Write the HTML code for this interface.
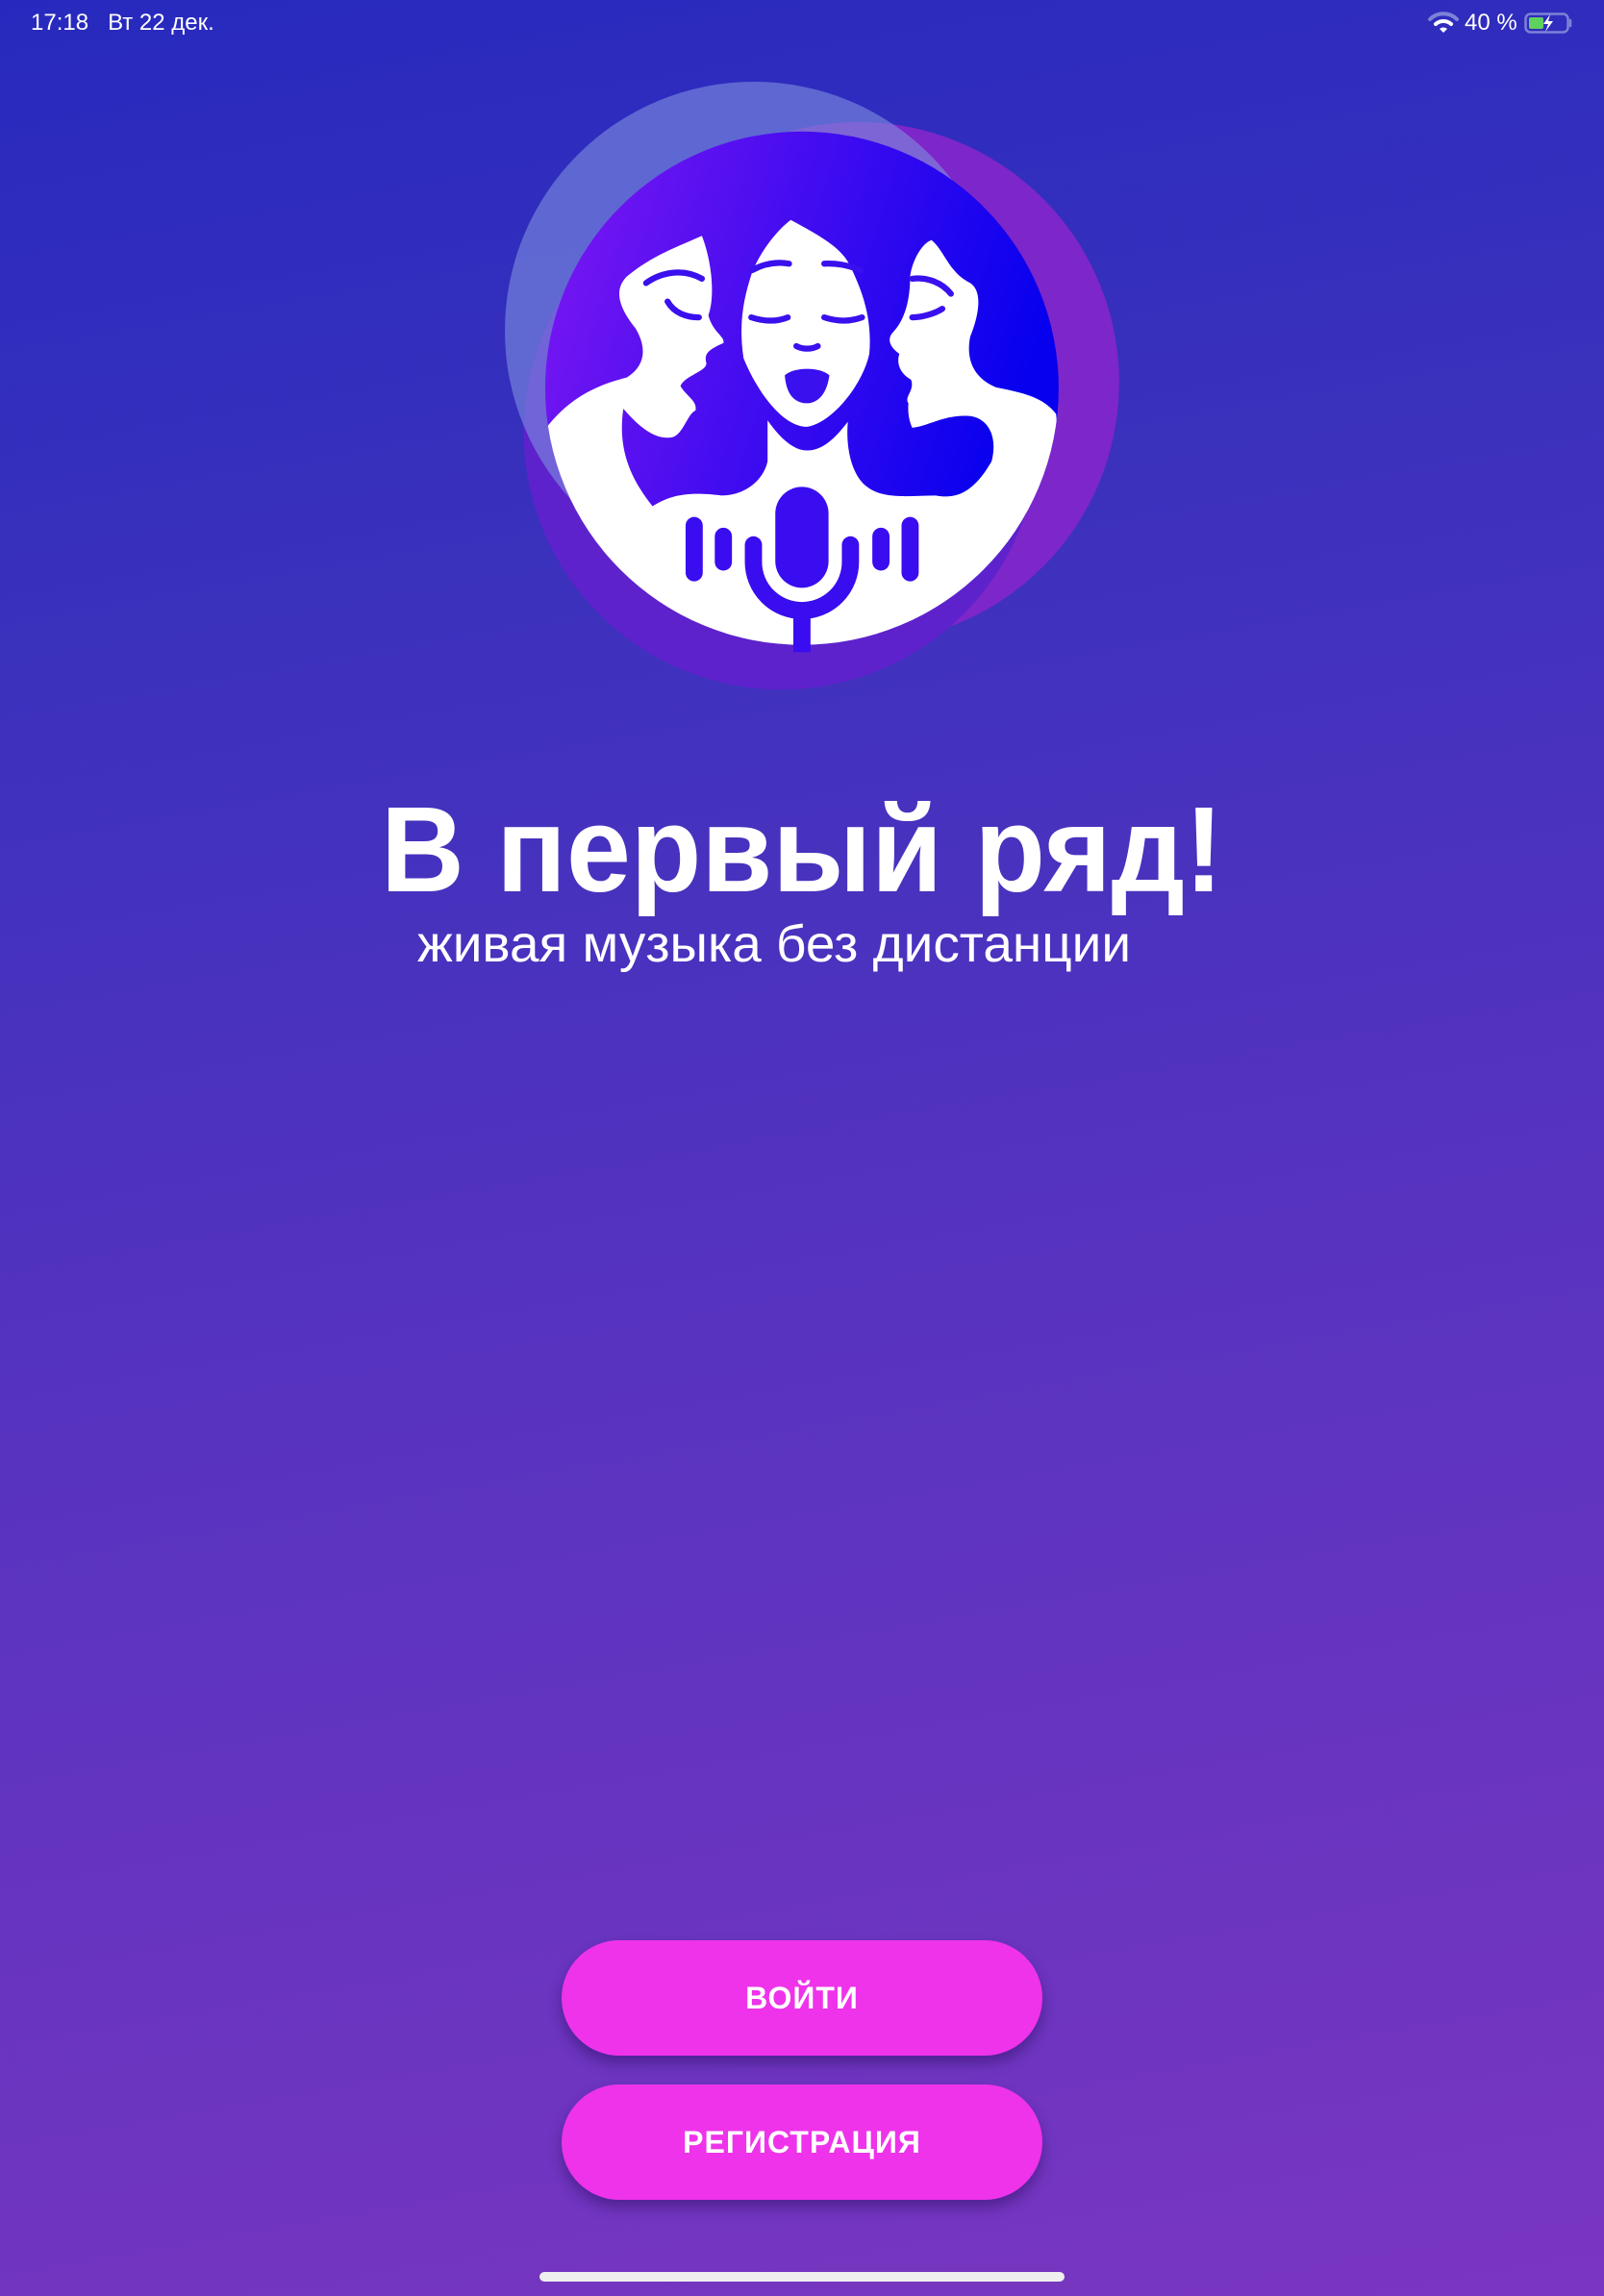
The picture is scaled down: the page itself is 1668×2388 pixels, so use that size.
<!DOCTYPE html>
<html><head><meta charset="utf-8"><style>
html,body{margin:0;padding:0}
body{width:1668px;height:2388px;overflow:hidden;position:relative;background:linear-gradient(170deg,#2729be 0%,#3a31bd 25%,#5633c0 55%,#7a36c0 100%);font-family:"Liberation Sans",sans-serif;color:#fff}
.st{position:absolute;top:8px;font-size:24px;line-height:32px}
.btn{position:absolute;left:584px;width:500px;height:120px;border-radius:60px;background:#ee33ea;box-shadow:0 8px 14px rgba(40,10,90,.45);text-align:center;line-height:120px;font-weight:bold;font-size:32px;letter-spacing:1px}
</style></head><body>
<div class="st" style="left:32px">17:18&nbsp;&nbsp;&nbsp;Вт 22 дек.</div>
<svg style="position:absolute;left:1484px;top:12px" width="34" height="24" viewBox="0 0 34 24">
<path d="M3 8 A20 20 0 0 1 31 8" stroke="#7d82d8" stroke-width="4" fill="none" stroke-linecap="round"/>
<path d="M9 13 A12 12 0 0 1 25 13" stroke="#fff" stroke-width="4" fill="none" stroke-linecap="round"/>
<path d="M13 18 L17 22 L21 18 A6 6 0 0 0 13 18Z" fill="#fff"/>
</svg>
<div class="st" style="left:1523px">40 %</div>
<svg style="position:absolute;left:1585px;top:13px" width="52" height="22" viewBox="0 0 52 22">
<rect x="1.5" y="1.5" width="44" height="19" rx="5" fill="none" stroke="#7d82d8" stroke-width="2.5"/>
<rect x="5" y="5" width="15" height="12" rx="2" fill="#5fd15c"/>
<path d="M48 8 v6" stroke="#7d82d8" stroke-width="2.5" stroke-linecap="round"/>
<path d="M27 2 L20 12 L25 12 L22 20 L30 9 L25 9 Z" fill="#fff"/>
</svg>

<svg style="position:absolute;left:500px;top:60px" width="700" height="700" viewBox="0 0 1568 1568">
<defs>
<linearGradient id="g" x1="0" y1="0" x2="1" y2="0.3"><stop offset="0" stop-color="#7f18f2"/><stop offset="1" stop-color="#0600ee"/></linearGradient>
<clipPath id="c"><circle cx="748" cy="770" r="598"/></clipPath>
</defs>
<circle cx="880" cy="757" r="607" fill="#7d26c9"/>
<circle cx="700" cy="872" r="600" fill="#5e22cc"/>
<circle cx="636" cy="636" r="580" fill="#7f90e0" opacity=".6"/>
<circle cx="748" cy="770" r="598" fill="url(#g)"/>
<g clip-path="url(#c)" fill="#fff">
<path d="M140 880 C200 790 280 760 340 745 C380 720 390 680 360 630 C320 580 310 540 340 510 C400 460 460 440 515 415 C540 480 545 560 530 600 C540 640 570 650 565 665 C530 680 520 690 525 710 C530 730 475 740 465 765 C480 790 505 800 500 822 C480 830 470 885 440 885 C400 890 360 850 332 818 C320 900 340 970 400 1045 C440 1020 480 1010 560 1020 C620 1020 660 980 668 940 L668 845 C700 890 730 915 760 915 C800 915 830 880 855 848 C850 900 860 970 900 1000 C940 1030 1000 1020 1060 1020 C1110 1030 1150 1010 1190 940 C1205 880 1180 840 1140 835 C1080 830 1040 860 1005 862 C995 840 995 820 996 805 C985 790 1012 775 1002 750 C975 735 968 710 975 690 C950 672 948 655 958 642 C990 610 1000 560 1000 510 C1005 470 1030 430 1050 425 C1080 450 1090 500 1140 525 C1170 545 1160 600 1140 650 C1130 700 1145 745 1200 768 C1260 780 1310 790 1340 830 L1400 1450 L100 1450 Z"/>
<path d="M722 378 C780 410 840 440 860 485 C890 545 912 610 905 690 C890 760 820 850 760 860 C700 860 640 770 612 700 C600 620 612 560 632 500 C652 450 690 402 722 378 Z"/>
</g>
<g fill="none" stroke="#3a10ee" stroke-width="14" stroke-linecap="round">
<path d="M385 525 C420 500 470 490 515 515"/>
<path d="M435 568 C450 595 480 605 508 605"/>
<path d="M632 495 C660 480 690 475 718 480"/>
<path d="M800 480 C830 478 860 485 885 495"/>
<path d="M630 605 C660 615 690 615 715 605"/>
<path d="M800 605 C830 615 860 615 888 605"/>
<path d="M1005 515 C1040 510 1075 525 1095 550"/>
<path d="M1005 605 C1030 605 1060 595 1075 585"/>
<path d="M735 672 C750 680 770 680 785 672"/>
</g>
<path d="M708 740 C730 720 790 720 812 740 C805 790 780 805 760 805 C735 805 712 790 708 740Z" fill="#3a10ee"/>
<g fill="#3a0cf0">
<rect x="686" y="1000" width="124" height="235" rx="62"/>
<rect x="728" y="1285" width="40" height="100"/>
<rect x="477" y="1070" width="40" height="150" rx="20"/>
<rect x="545" y="1095" width="40" height="100" rx="20"/>
<rect x="912" y="1095" width="40" height="100" rx="20"/>
<rect x="980" y="1070" width="40" height="150" rx="20"/>
</g>
<path d="M635 1135 L635 1175 A113 113 0 0 0 861 1175 L861 1135" fill="none" stroke="#3a0cf0" stroke-width="40" stroke-linecap="round"/>
</svg>

<svg style="position:absolute;left:0;top:800px" width="1668" height="230" viewBox="0 0 1668 230">
<text x="396" y="127" textLength="876" lengthAdjust="spacingAndGlyphs" font-family="Liberation Sans" font-weight="bold" font-size="126" fill="#fff">В первый ряд!</text>
<text x="434" y="200" textLength="742" lengthAdjust="spacingAndGlyphs" font-family="Liberation Sans" font-size="54" fill="#fff">живая музыка без дистанции</text>
</svg>

<div class="btn" style="top:2018px">ВОЙТИ</div>
<div class="btn" style="top:2168px">РЕГИСТРАЦИЯ</div>
<div style="position:absolute;left:561px;top:2363px;width:546px;height:10px;border-radius:5px;background:#efefef"></div>
</body></html>
